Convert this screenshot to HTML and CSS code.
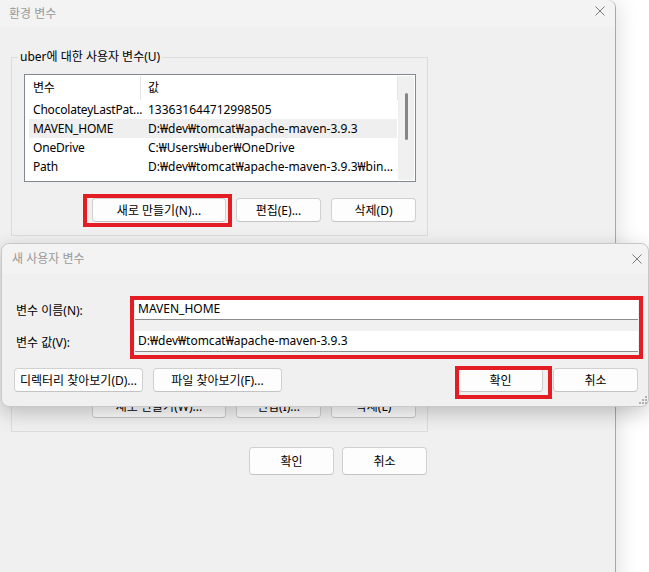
FILE: index.html
```html
<!DOCTYPE html>
<html lang="ko">
<head>
  <meta charset="UTF-8">
  <title>환경 변수</title>
  <link rel="stylesheet" href="styles.css">
</head>
<body>
  <div class="desk">
    <div class="win">
      <div class="titlebar">
        <span class="title">환경 변수</span>
        <svg class="close" width="10" height="10" viewBox="0 0 10 10"><path d="M0.5 0.5L9.5 9.5M9.5 0.5L0.5 9.5" stroke="#7a7a7a" stroke-width="1"/></svg>
      </div>

      <fieldset class="group">
        <legend>uber에 대한 사용자 변수(U)</legend>
        <div class="list">
          <div class="list-main">
            <div class="row head"><span class="c1">변수</span><span class="c2">값</span></div>
            <div class="row"><span class="c1">ChocolateyLastPat...</span><span class="c2">133631644712998505</span></div>
            <div class="row sel"><span class="c1">MAVEN_HOME</span><span class="c2">D:₩dev₩tomcat₩apache-maven-3.9.3</span></div>
            <div class="row"><span class="c1">OneDrive</span><span class="c2">C:₩Users₩uber₩OneDrive</span></div>
            <div class="row"><span class="c1">Path</span><span class="c2">D:₩dev₩tomcat₩apache-maven-3.9.3₩bin...</span></div>
          </div>
          <div class="scroll"><div class="thumb"></div></div>
        </div>
        <div class="btns">
          <button class="btn wide">새로 만들기(N)...</button>
          <button class="btn">편집(E)...</button>
          <button class="btn">삭제(D)</button>
        </div>
      </fieldset>

      <!-- system variables: mostly hidden under the dialog -->
      <fieldset class="group sys">
        <div class="list"></div>
        <div class="btns">
          <button class="btn wide">새로 만들기(W)...</button>
          <button class="btn">편집(I)...</button>
          <button class="btn">삭제(L)</button>
        </div>
      </fieldset>

      <div class="btns main-btns">
        <button class="btn big">확인</button>
        <button class="btn big">취소</button>
      </div>
    </div>

    <div class="dlg">
      <div class="dlg-title">
        <span class="title">새 사용자 변수</span>
        <svg class="close" width="10" height="10" viewBox="0 0 10 10"><path d="M0.5 0.5L9.5 9.5M9.5 0.5L0.5 9.5" stroke="#7a7a7a" stroke-width="1"/></svg>
      </div>
      <div class="dlg-body">
        <div class="field">
          <span class="label">변수 이름(N):</span>
          <div class="input">MAVEN_HOME</div>
        </div>
        <div class="field">
          <span class="label">변수 값(V):</span>
          <div class="input">D:₩dev₩tomcat₩apache-maven-3.9.3</div>
        </div>
        <div class="dlg-btns">
          <button class="btn browse">디렉터리 찾아보기(D)...</button>
          <button class="btn browse">파일 찾아보기(F)...</button>
          <span class="spacer"></span>
          <button class="btn">확인</button>
          <button class="btn">취소</button>
        </div>
      </div>
      <svg class="grip" width="8" height="8" viewBox="0 0 8 8">
        <rect x="6" y="0" width="2" height="2" fill="#b0b0b0"/>
        <rect x="3" y="3" width="2" height="2" fill="#b0b0b0"/>
        <rect x="6" y="3" width="2" height="2" fill="#b0b0b0"/>
        <rect x="0" y="6" width="2" height="2" fill="#b0b0b0"/>
        <rect x="3" y="6" width="2" height="2" fill="#b0b0b0"/>
        <rect x="6" y="6" width="2" height="2" fill="#b0b0b0"/>
      </svg>
    </div>

    <div class="mark mark-new"></div>
    <div class="mark mark-inputs"></div>
    <div class="mark mark-ok"></div>
  </div>
</body>
</html>
```

FILE: styles.css
```css
body {
  margin: 0;
  background-color: #fff;
  font-family: 'Noto Sans', 'Noto Sans CJK KR', sans-serif;
  font-size: 12px;
  color: #000;
  overflow: hidden;
}
.desk {
  position: relative;
  width: 649px;
  height: 572px;
  overflow: hidden;
}
.win {
  width: 615px;
  height: 600px;
  background-color: #f0f0f0;
  border-right: 1px solid #a8a8a8;
  border-top-right-radius: 8px;
  box-shadow: 2px 0 22px rgba(0,0,0,0.13);
}
.titlebar {
  height: 27px;
  background-color: #f3f3f3;
  border-top-right-radius: 8px;
  display: flex;
  align-items: center;
  justify-content: space-between;
  padding: 0 10px 0 9px;
}
.title {
  color: #9a9a9a;
  line-height: 16px;
}
.titlebar .close {
  margin-top: -5px;
}
.group {
  margin: 22px 0 0 11px;
  width: 417px;
  box-sizing: border-box;
  padding: 9px 11px 13px 12px;
  border: 1px solid #dcdcdc;
  min-width: 0;
}
.group legend {
  padding: 0 2px;
  margin-left: -6px;
  line-height: 16px;
}
.group.sys {
  margin-top: 16px;
  padding-top: 17px;
}
.list {
  display: flex;
  height: 108px;
  box-sizing: border-box;
  border: 1px solid #828790;
  padding: 1px;
  background-color: #fff;
}
.list-main {
  flex: 1;
  overflow: hidden;
  padding-right: 1px;
}
.row {
  display: flex;
  height: 19px;
  line-height: 19px;
  margin-left: 3px;
  white-space: nowrap;
}
.row.head {
  height: 24px;
  line-height: 24px;
  margin-right: -1px;
}
.row.sel {
  background-color: #efefef;
}
.c1 {
  width: 108px;
  padding-left: 4px;
  letter-spacing: -0.2px;
}
.c2 {
  flex: 1;
  padding-left: 7px;
  overflow: hidden;
}
.head .c1 {
  border-right: 1px solid #e5e5e5;
  width: 107px;
}
.head .c2 {
  border-right: 1px solid #e5e5e5;
}
.scroll {
  width: 16px;
  background-color: #f0f0f0;
}
.thumb {
  width: 3px;
  height: 47px;
  margin: 17px 0 0 7px;
  border-radius: 2px;
  background-color: #858585;
}
.btns {
  display: flex;
  justify-content: flex-end;
  gap: 10px;
  margin-top: 16px;
}
.btn {
  width: 85px;
  height: 24px;
  padding: 0;
  font-family: inherit;
  font-size: 12px;
  color: #000;
  background-color: #fdfdfd;
  border: 1px solid #d0d0d0;
  border-bottom-color: #c4c4c4;
  border-radius: 4px;
}
.btn.wide {
  width: 134px;
}
.main-btns {
  width: 417px;
  margin: 15px 0 0 11px;
  padding-right: 1px;
  box-sizing: border-box;
  gap: 8px;
}
.btn.big {
  height: 28px;
}
.dlg {
  position: absolute;
  left: 1px;
  top: 243px;
  width: 648px;
  height: 164px;
  box-sizing: border-box;
  background-color: #f0f0f0;
  border: 1px solid #c8c8c8;
  border-radius: 8px;
  box-shadow: 0 6px 20px rgba(0,0,0,0.22);
}
.dlg-title {
  height: 30px;
  background-color: #f3f3f3;
  border-radius: 8px 8px 0 0;
  display: flex;
  align-items: center;
  justify-content: space-between;
  padding: 0 6px 0 10px;
}
.dlg-body {
  padding: 25px 10px 14px 12px;
}
.field {
  display: flex;
  align-items: center;
  margin-bottom: 11px;
}
.label {
  width: 119px;
  padding-left: 2px;
}
.input {
  flex: 1;
  height: 21px;
  box-sizing: border-box;
  line-height: 20px;
  padding-left: 3px;
  background-color: #fff;
  border-bottom: 1px solid #8c8c8c;
}
.dlg-btns {
  display: flex;
  gap: 10px;
  margin-top: 16px;
}
.btn.browse {
  width: 129px;
}
.spacer {
  flex: 1;
}
.grip {
  position: absolute;
  right: 1px;
  bottom: 2px;
}
.mark {
  position: absolute;
  border: 4px solid #e31d23;
  box-sizing: border-box;
}
.mark-new {
  left: 83px;
  top: 194px;
  width: 149px;
  height: 33px;
}
.mark-inputs {
  left: 130px;
  top: 296px;
  width: 513px;
  height: 63px;
}
.mark-ok {
  left: 455px;
  top: 366px;
  width: 97px;
  height: 33px;
}
```
